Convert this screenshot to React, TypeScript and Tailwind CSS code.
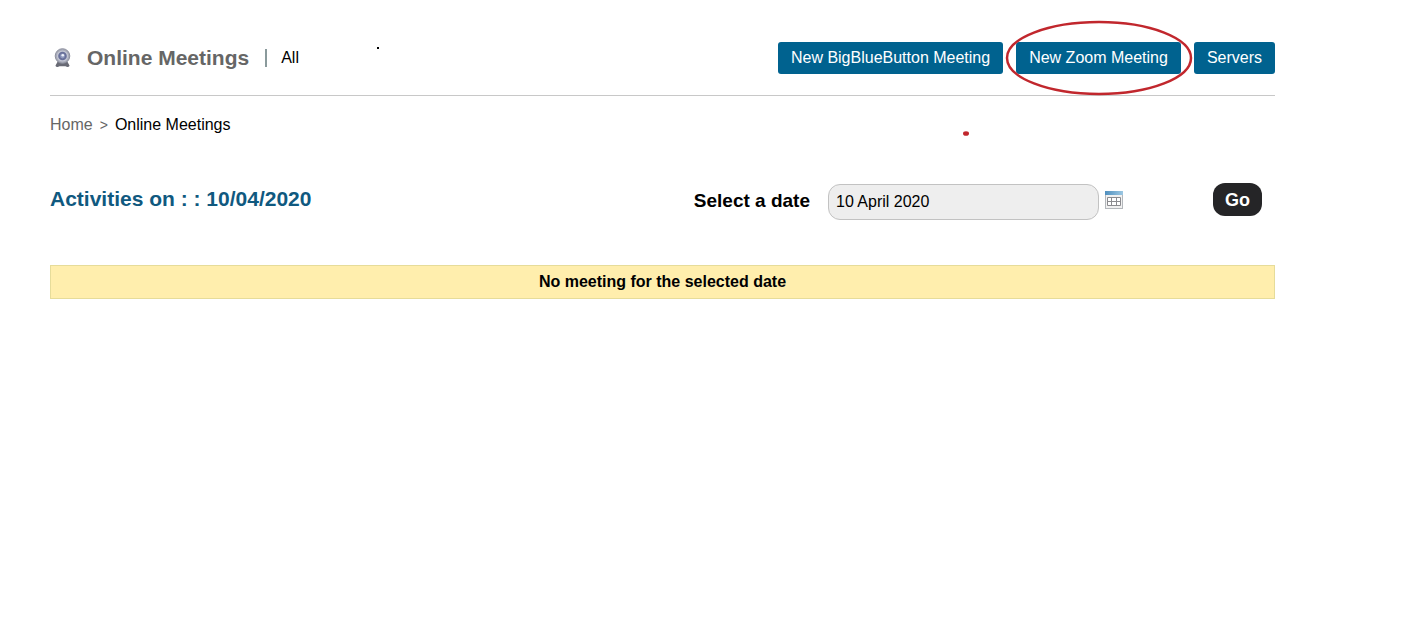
import type React from "react"

import { useState } from "react"

function WebcamIcon() {
  return (
    <svg width="17" height="20" viewBox="0 0 17 20" aria-hidden="true">
      <path d="M4 13h9l2.500 4.500c-.3 1.800-2.500 1.800-4 .8h-6c-1.500 1-3.700 1-4-.8z" fill="#686a75" />
      <circle cx="8.500" cy="8" r="7.300" fill="#a7aab8" stroke="#8d909e" />
      <circle cx="8.500" cy="8" r="5.600" fill="#c3c6d3" />
      <circle cx="8.500" cy="8" r="4.300" fill="#68709a" />
      <circle cx="8.500" cy="8" r="2.400" fill="#8f99bd" />
      <circle cx="8.800" cy="7.300" r="1.300" fill="#eef1fa" />
    </svg>
  )
}

function CalendarIcon() {
  return (
    <svg width="18" height="18" viewBox="0 0 18 18" aria-hidden="true">
      <defs>
        <linearGradient id="calendar-top">
          <stop offset="0" stopColor="#4f8fbe" />
          <stop offset="1" stopColor="#9cc7e2" />
        </linearGradient>
      </defs>
      <rect x="0.500" y="0.500" width="17" height="17" fill="#f1f1f1" stroke="#b3b7bb" />
      <rect width="18" height="4" fill="url(#calendar-top)" />
      <path d="M2.500 6.500h13v8h-13zM2.500 10.500h13M6.500 6.500v8M11.500 6.500v8" fill="#fff" stroke="#8b8b8f" />
    </svg>
  )
}

function ActionButton({ children }: { children: React.ReactNode }) {
  return (
    <button type="button" className="h-8 rounded-[3px] bg-[#00628f] px-[13px] leading-8 text-white">
      {children}
    </button>
  )
}

export default function App() {
  const [date, setDate] = useState("10 April 2020")

  return (
    <main className="min-h-screen bg-white pt-10 pr-[127px] pl-[50px] font-['Liberation_Sans',Arial,sans-serif] text-base text-black">
      <header className="flex h-14 items-start justify-between border-b border-[#c8c8c8]">
        <div className="flex h-9 items-center">
          <div className="ml-1 w-[33px]">
            <WebcamIcon />
          </div>
          <h1 className="text-[21px] font-bold text-[#666666]">Online Meetings</h1>
          <span className="mr-[14px] ml-4 h-[18px] border-l-2 border-[#8a9a9c]" />
          <a href="#all">All</a>
          <span className="mb-5 ml-[78px] size-0.5 bg-black" />
        </div>
        <div className="mt-0.5 flex gap-[13px]">
          <ActionButton>New BigBlueButton Meeting</ActionButton>
          <div className="relative">
            <ActionButton>New Zoom Meeting</ActionButton>
            <svg
              className="pointer-events-none absolute -top-[22px] -left-[11px]"
              width="188"
              height="76"
              viewBox="0 0 188 76"
              aria-hidden="true"
            >
              <ellipse cx="94" cy="38" rx="92" ry="36" fill="none" stroke="#c1272d" strokeWidth="2.500" />
            </svg>
          </div>
          <ActionButton>Servers</ActionButton>
        </div>
      </header>

      <nav aria-label="Breadcrumb" className="mt-[17px] flex h-6 items-center gap-[7px]">
        <a href="#home" className="text-[#666666]">
          Home
        </a>
        <span className="text-sm text-[#666666]">&gt;</span>
        <span>Online Meetings</span>
        <svg className="mt-4 mr-[306px] ml-auto" width="6" height="5" viewBox="0 0 6 5" aria-hidden="true">
          <ellipse cx="3" cy="2.500" rx="3" ry="2.300" fill="#c1272d" />
        </svg>
      </nav>

      <section className="mt-[46px] flex items-start justify-between">
        <h2 className="text-[21px] font-bold text-[#10597f]">Activities on : : 10/04/2020</h2>
        <form onSubmit={(e) => e.preventDefault()} className="flex items-start pr-[13px]">
          <label htmlFor="date" className="mr-[18px] text-[19px] leading-9 font-bold">
            Select a date
          </label>
          <input
            id="date"
            type="text"
            value={date}
            onChange={(e) => setDate(e.target.value)}
            className="mt-px h-9 w-[271px] rounded-xl border border-[#c2c2c2] bg-[#eeeeee] px-[7px]"
          />
          <button type="button" aria-label="Open calendar" className="mt-2 mr-[90px] ml-1.5">
            <CalendarIcon />
          </button>
          <button type="submit" className="h-[33px] rounded-xl bg-[#252527] px-3 text-lg font-bold text-white">
            Go
          </button>
        </form>
      </section>

      <p className="mt-[45px] border border-[#e6dc9a] bg-[#ffeead] py-1 text-center font-bold">
        No meeting for the selected date
      </p>
    </main>
  )
}
